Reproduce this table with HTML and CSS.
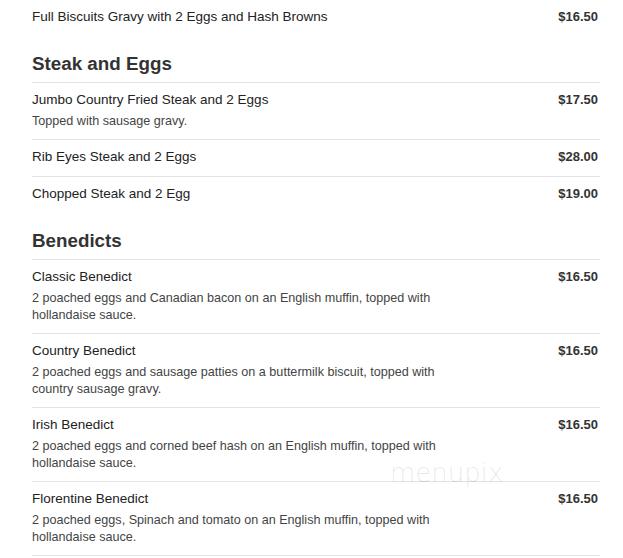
FILE: index.html
```html
<!DOCTYPE html>
<html>
<head>
<meta charset="utf-8">
<link rel="stylesheet" href="styles.css">
</head>
<body>
<div class="menu">
  <div class="section first">
    <div class="item">
      <div class="row"><span class="name">Full Biscuits Gravy with 2 Eggs and Hash Browns</span><span class="price">$16.50</span></div>
    </div>
  </div>

  <div class="section">
    <h2 class="heading">Steak and Eggs</h2>
    <div class="item">
      <div class="row"><span class="name">Jumbo Country Fried Steak and 2 Eggs</span><span class="price">$17.50</span></div>
      <p class="desc">Topped with sausage gravy.</p>
    </div>
    <div class="item">
      <div class="row"><span class="name">Rib Eyes Steak and 2 Eggs</span><span class="price">$28.00</span></div>
    </div>
    <div class="item">
      <div class="row"><span class="name">Chopped Steak and 2 Egg</span><span class="price">$19.00</span></div>
    </div>
  </div>

  <div class="section">
    <h2 class="heading">Benedicts</h2>
    <div class="item">
      <div class="row"><span class="name">Classic Benedict</span><span class="price">$16.50</span></div>
      <p class="desc">2 poached eggs and Canadian bacon on an English muffin, topped with hollandaise sauce.</p>
    </div>
    <div class="item">
      <div class="row"><span class="name">Country Benedict</span><span class="price">$16.50</span></div>
      <p class="desc">2 poached eggs and sausage patties on a buttermilk biscuit, topped with country sausage gravy.</p>
    </div>
    <div class="item">
      <div class="row"><span class="name">Irish Benedict</span><span class="price">$16.50</span></div>
      <p class="desc">2 poached eggs and corned beef hash on an English muffin, topped with hollandaise sauce.</p>
    </div>
    <div class="item">
      <div class="row"><span class="name">Florentine Benedict</span><span class="price">$16.50</span></div>
      <p class="desc">2 poached eggs, Spinach and tomato on an English muffin, topped with hollandaise sauce.</p>
    </div>
    <div class="item">
      <div class="row"><span class="name">&nbsp;</span></div>
    </div>
  </div>
  <div class="watermark">menupix</div>
</div>
</body>
</html>
```

FILE: styles.css
```css
html, body {
  margin: 0;
  padding: 0;
  background: #fff;
}
body {
  font-family: "Liberation Sans", Arial, sans-serif;
  color: #333;
  overflow: hidden;
}
.menu {
  position: relative;
  width: 568px;
  margin-left: 32px;
}
.heading {
  margin: 17px 0 0;
  padding: 0 0 7px;
  font-size: 18.8px;
  line-height: 22px;
  font-weight: bold;
  color: #333;
  border-bottom: 1px solid #e3e3e3;
}
.item {
  padding: 8px 0 10px;
  border-top: 1px solid #e3e3e3;
}
.heading + .item {
  border-top: none;
}
.section.first .item {
  border-top: none;
  padding-top: 8px;
}
.row {
  display: flex;
  justify-content: space-between;
  align-items: baseline;
  padding-right: 2px;
}
.name {
  font-size: 13.5px;
  line-height: 18px;
  color: #222;
}
.price {
  font-size: 13px;
  line-height: 18px;
  font-weight: bold;
  color: #333;
}
.desc {
  margin: 4px 0 -1px;
  max-width: 420px;
  font-size: 12.6px;
  line-height: 17px;
  color: #444;
}
.watermark {
  position: absolute;
  left: 358px;
  top: 458px;
  font-size: 26px;
  font-family: "DejaVu Sans", sans-serif;
  font-weight: 200;
  color: rgba(0,0,0,0.1);
  pointer-events: none;
}
```
